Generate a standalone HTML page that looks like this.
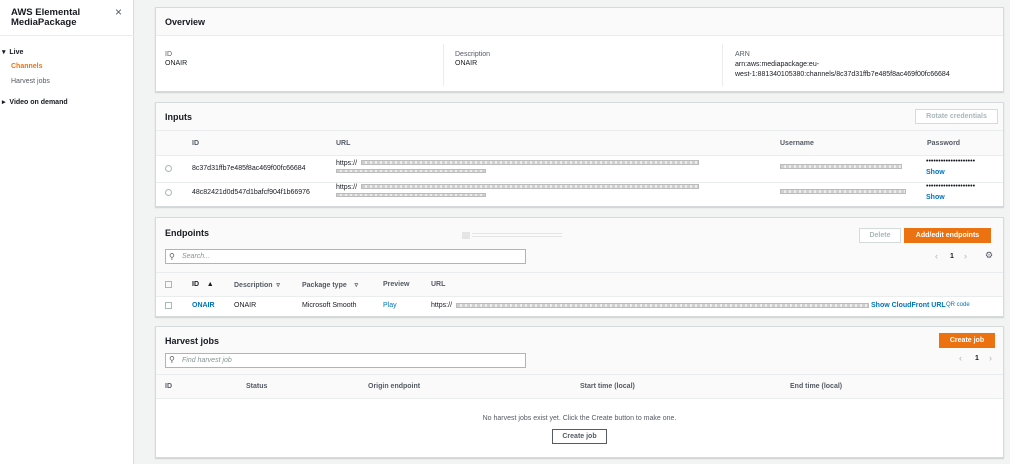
<!DOCTYPE html><html><head><style>
*{box-sizing:border-box;margin:0;padding:0}
body{width:1010px;height:464px;background:#f2f3f3;font-family:"Liberation Sans",sans-serif;font-size:7px;color:#16191f;position:relative;overflow:hidden}
.a{position:absolute;white-space:nowrap}
.side{position:absolute;left:0;top:0;width:134px;height:464px;background:#fff;border-right:1px solid #d5dbdb}
.p{position:absolute;left:155px;width:849px;background:#fff;border:1px solid #d5dbdb;box-shadow:0 1px 1px rgba(0,0,0,.15)}
.h{position:absolute;left:0;right:0;top:0;background:#fafafa;border-bottom:1px solid #eaeded}
.t{font-weight:bold;font-size:9px}
.ch{position:absolute;left:0;right:0;background:#fafafa;border-bottom:1px solid #eaeded}
.g{color:#545b64}
.lk{color:#0073bb}
.bo{background:#ec7211;color:#fff;font-weight:bold;text-align:center}
.bw{background:#fff;border:1px solid #d5dbdb;color:#aab7b8;text-align:center;font-weight:bold}
.blur{height:6px;background:repeating-linear-gradient(90deg,#d0d0d0 0 3px,#ececec 3px 5px);border:1px solid #bbb}
.sr{border:1px solid #aab7b8;background:#fff;color:#879596;font-style:italic;padding-left:16px}
.sep{position:absolute;width:1px;background:#eaeded}
</style></head><body>
<div class="side">
<div class="a t" style="left:11px;top:8px;font-size:9.5px;line-height:10px">AWS Elemental<br>MediaPackage</div>
<div class="a" style="left:115px;top:5px;font-size:12px;color:#545b64">×</div>
<div style="position:absolute;left:0;top:35px;width:134px;border-top:1px solid #eaeded"></div>
<div class="a" style="left:2px;top:48px;font-weight:bold;font-size:7px">▾ &nbsp;Live</div>
<div class="a" style="left:11px;top:63px;color:#ec7211;font-weight:bold">Channels</div>
<div class="a g" style="left:11px;top:78px">Harvest jobs</div>
<div class="a" style="left:2px;top:98px;font-weight:bold">▸ &nbsp;Video on demand</div>
</div>

<div class="p" style="top:7px;height:85px">
<div class="h" style="height:28px"><div class="a t" style="left:9px;top:9px">Overview</div></div>
<div class="a g" style="left:9px;top:43px">ID</div><div class="a" style="left:9px;top:52px">ONAIR</div>
<div class="sep" style="left:287px;top:36px;height:42px"></div>
<div class="a g" style="left:299px;top:43px">Description</div><div class="a" style="left:299px;top:52px">ONAIR</div>
<div class="sep" style="left:566px;top:36px;height:42px"></div>
<div class="a g" style="left:579px;top:43px">ARN</div><div class="a" style="left:579px;top:52px;line-height:10px">arn:aws:mediapackage:eu-<br>west-1:881340105380:channels/8c37d31ffb7e485f8ac469f00fc66684</div>
</div>

<div class="p" style="top:102px;height:105px">
<div class="h" style="height:28px"><div class="a t" style="left:9px;top:9px">Inputs</div>
<div class="a bw" style="left:759px;top:6px;width:83px;height:15px;line-height:13px">Rotate credentials</div></div>
<div class="ch" style="top:28px;height:25px">
<div class="a g" style="left:36px;top:9px;font-weight:bold">ID</div>
<div class="a g" style="left:180px;top:9px;font-weight:bold">URL</div>
<div class="a g" style="left:624px;top:9px;font-weight:bold">Username</div>
<div class="a g" style="left:771px;top:9px;font-weight:bold">Password</div></div>
<div class="a" style="left:9px;top:62px;width:7px;height:7px;border:1px solid #aab7b8;border-radius:50%"></div>
<div class="a" style="left:36px;top:62px">8c37d31ffb7e485f8ac469f00fc66684</div>
<div class="a" style="left:180px;top:57px">https://</div><div class="a blur" style="left:205px;top:57px;width:338px;height:5px"></div><div class="a blur" style="left:180px;top:66px;width:150px;height:4px"></div>
<div class="a blur" style="left:624px;top:61px;width:122px;height:5px"></div>
<div class="a" style="left:770px;top:55px">••••••••••••••••••••</div><div class="a lk" style="left:770px;top:66px;font-weight:bold">Show</div>
<div style="position:absolute;left:0;right:0;top:79px;border-top:1px solid #eaeded"></div>
<div class="a" style="left:9px;top:86px;width:7px;height:7px;border:1px solid #aab7b8;border-radius:50%"></div>
<div class="a" style="left:36px;top:86px">48c82421d0d547d1bafcf904f1b66976</div>
<div class="a" style="left:180px;top:81px">https://</div><div class="a blur" style="left:205px;top:81px;width:338px;height:5px"></div><div class="a blur" style="left:180px;top:90px;width:150px;height:4px"></div>
<div class="a blur" style="left:624px;top:86px;width:126px;height:5px"></div>
<div class="a" style="left:770px;top:80px">••••••••••••••••••••</div><div class="a lk" style="left:770px;top:91px;font-weight:bold">Show</div>
</div>

<div class="p" style="top:217px;height:100px">
<div class="h" style="height:55px"><div class="a t" style="left:9px;top:10px">Endpoints</div>
<div class="a" style="left:306px;top:14px;width:8px;height:7px;background:#e5e5e5"></div>
<div class="a" style="left:316px;top:15px;width:90px;height:4px;border-top:1px solid #e5e5e5;border-bottom:1px solid #e5e5e5"></div>
<div class="a bw" style="left:703px;top:10px;width:42px;height:15px;line-height:13px">Delete</div>
<div class="a bo" style="left:748px;top:10px;width:87px;height:15px;line-height:15px">Add/edit endpoints</div>
<div class="a sr" style="left:9px;top:31px;width:361px;height:15px;line-height:13px">Search...</div>
<div class="a" style="left:13px;top:34px;font-size:8px;color:#545b64">⚲</div>
<div class="a" style="left:779px;top:33px;font-size:9px;color:#aab7b8">‹</div>
<div class="a" style="left:794px;top:35px;font-weight:bold">1</div>
<div class="a" style="left:808px;top:33px;font-size:9px;color:#aab7b8">›</div>
<div class="a" style="left:829px;top:32px;font-size:9px;color:#545b64">⚙</div></div>
<div class="ch" style="top:55px;height:24px;background:#fafafa">
<div class="a" style="left:9px;top:8px;width:7px;height:7px;border:1px solid #aab7b8"></div>
<div class="a" style="left:36px;top:8px;font-weight:bold">ID &nbsp;&nbsp;&nbsp;▲</div>
<div class="a g" style="left:78px;top:8px;font-weight:bold">Description &nbsp;▿</div>
<div class="a g" style="left:146px;top:8px;font-weight:bold">Package type &nbsp;&nbsp;&nbsp;▿</div>
<div class="a g" style="left:227px;top:8px;font-weight:bold">Preview</div>
<div class="a g" style="left:275px;top:8px;font-weight:bold">URL</div></div>
<div class="a" style="left:9px;top:84px;width:7px;height:7px;border:1px solid #aab7b8"></div>
<div class="a lk" style="left:36px;top:84px;font-weight:bold">ONAIR</div>
<div class="a" style="left:78px;top:84px">ONAIR</div>
<div class="a" style="left:146px;top:84px">Microsoft Smooth</div>
<div class="a lk" style="left:227px;top:84px">Play</div>
<div class="a" style="left:275px;top:84px">https://</div><div class="a blur" style="left:300px;top:85px;width:413px;height:5px"></div>
<div class="a lk" style="left:715px;top:84px;font-weight:bold">Show CloudFront URL</div>
<div class="a lk" style="left:790px;top:84px;font-size:6px">QR code</div>
</div>

<div class="p" style="top:326px;height:132px">
<div class="h" style="height:48px;background:#fafafa"><div class="a t" style="left:9px;top:9px">Harvest jobs</div>
<div class="a bo" style="left:783px;top:6px;width:56px;height:15px;line-height:15px">Create job</div>
<div class="a sr" style="left:9px;top:26px;width:361px;height:15px;line-height:13px">Find harvest job</div>
<div class="a" style="left:13px;top:28px;font-size:8px;color:#545b64">⚲</div>
<div class="a" style="left:803px;top:26px;font-size:9px;color:#aab7b8">‹</div>
<div class="a" style="left:819px;top:28px;font-weight:bold">1</div>
<div class="a" style="left:833px;top:26px;font-size:9px;color:#aab7b8">›</div></div>
<div class="ch" style="top:48px;height:24px">
<div class="a g" style="left:9px;top:8px;font-weight:bold">ID</div>
<div class="a g" style="left:90px;top:8px;font-weight:bold">Status</div>
<div class="a g" style="left:212px;top:8px;font-weight:bold">Origin endpoint</div>
<div class="a g" style="left:424px;top:8px;font-weight:bold">Start time (local)</div>
<div class="a g" style="left:634px;top:8px;font-weight:bold">End time (local)</div></div>
<div class="a g" style="left:0;right:0;top:88px;text-align:center">No harvest jobs exist yet. Click the Create button to make one.</div>
<div class="a" style="left:396px;top:102px;width:55px;height:15px;border:1px solid #545b64;text-align:center;line-height:13px;font-weight:bold;color:#545b64">Create job</div>
</div>
</body></html>
